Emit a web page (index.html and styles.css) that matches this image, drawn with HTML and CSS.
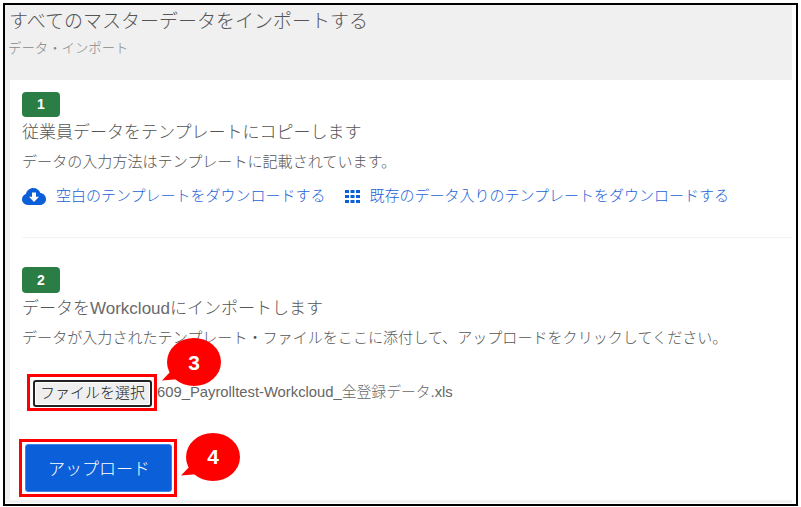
FILE: index.html
```html
<!DOCTYPE html>
<html lang="ja">
<head>
<meta charset="utf-8">
<title>データ・インポート</title>
<link rel="stylesheet" href="styles.css">
</head>
<body>
<div class="frame">
  <main class="main">
    <header class="head">
      <h1 class="title">すべてのマスターデータをインポートする</h1>
      <p class="crumb">データ・インポート</p>
    </header>
    <div class="card">
      <section class="step step-one">
        <span class="badge">1</span>
        <h2 class="step-title">従業員データをテンプレートにコピーします</h2>
        <p class="desc">データの入力方法はテンプレートに記載されています。</p>
        <div class="links">
          <a class="link">
            <svg class="icon-cloud" viewBox="0 0 24 17" aria-hidden="true"><path fill="#0b5fd8" d="M6 17C2.7 17 0 14.5 0 11.3 0 8.8 1.6 6.7 3.9 6 4.7 2.5 7.7 0 11.3 0c3.3 0 6.1 2.1 7.1 5.1 3.2.4 5.6 3 5.6 6.1 0 3.2-2.7 5.8-6 5.8z"/><path fill="#fff" d="M10 4.5h4v4.3h3l-5 5.2-5-5.2h3z"/></svg>
            空白のテンプレートをダウンロードする
          </a>
          <a class="link">
            <svg class="icon-grid" viewBox="0 0 15 13" aria-hidden="true"><path fill="#0b5fd8" d="M0 0h4v3H0zM5.500 0h4v3h-4zM11 0h4v3h-4zM0 5h4v3H0zM5.500 5h4v3h-4zM11 5h4v3h-4zM0 10h4v3H0zM5.500 10h4v3h-4zM11 10h4v3h-4z"/></svg>
            既存のデータ入りのテンプレートをダウンロードする
          </a>
        </div>
      </section>
      <section class="step step-two">
        <span class="badge badge-tall">2</span>
        <h2 class="step-title">データを<span class="latin">Workcloud</span>にインポートします</h2>
        <p class="desc">データが入力されたテンプレート・ファイルをここに添付して、アップロードをクリックしてください。</p>
        <div class="file-row">
          <span class="mark mark-file"><button class="file-btn" type="button">ファイルを選択</button></span>
          <span class="file-name">609_Payrolltest-Workcloud_全登録データ.xls</span>
        </div>
        <span class="mark mark-upload"><button class="upload-btn" type="button">アップロード</button></span>
      </section>
    </div>
  </main>
  <svg class="bubble bubble-3" viewBox="0 0 60 52" aria-hidden="true"><ellipse fill="#ff0000" cx="33" cy="24" rx="27" ry="24"/><polygon fill="#ff0000" points="1,42.500 19,41 10,33"/></svg>
  <span class="bubble-num num-3">3</span>
  <svg class="bubble bubble-4" viewBox="0 0 60 52" aria-hidden="true"><ellipse fill="#ff0000" cx="33" cy="24" rx="27" ry="24"/><polygon fill="#ff0000" points="1,42.500 19,41 10,33"/></svg>
  <span class="bubble-num num-4">4</span>
</div>
</body>
</html>
```
FILE: styles.css
```css
* { box-sizing: border-box; }
html, body { margin: 0; padding: 0; background: #fff; }
body {
  width: 801px;
  height: 507px;
  overflow: hidden;
  padding: 3px;
  font-family: "Liberation Sans", "Noto Sans CJK JP", sans-serif;
  color: #555;
}
.frame {
  position: relative;
  width: 795px;
  height: 503px;
  border: 2px solid #000;
  padding-right: 4px;
  background: #fff;
}
.main {
  height: 498px;
  background: #f0f0f0;
  padding: 0 0 3px 5px;
  display: flex;
  flex-direction: column;
}
.head { height: 75px; flex: none; }
.title {
  margin: 0 0 0 -1px;
  padding-top: 2px;
  font-size: 19px;
  font-weight: 300;
  line-height: 30px;
  color: #555;
}
.crumb {
  margin: -2px 0 0 -2px;
  font-size: 13.4px;
  font-weight: 300;
  line-height: 28px;
  color: #888;
}
.card {
  flex: 1;
  background: #fff;
  padding-left: 12px;
}
.step-one { height: 158px; padding-top: 12px; border-bottom: 1px solid #f3f3f3; }
.step-two { padding-top: 29px; }
.badge {
  display: block;
  width: 38px;
  height: 25px;
  background: #2a7d45;
  border-radius: 4px;
  color: #fff;
  font: bold 14px/25px "Liberation Sans", sans-serif;
  text-align: center;
}
.badge-tall { height: 26px; line-height: 26px; }
.step-title {
  margin: 2px 0 0;
  font-size: 17px;
  font-weight: 300;
  line-height: 28px;
  color: #555;
}
.latin { color: #6a6a6a; }
.desc {
  margin: 0;
  font-size: 15.07px;
  font-weight: 300;
  line-height: 29px;
  color: #555;
}
.links {
  display: flex;
  gap: 19px;
  margin-top: 5px;
  height: 30px;
  align-items: center;
}
.link {
  display: flex;
  align-items: center;
  font-size: 15px;
  font-weight: 300;
  color: #1c62d6;
  line-height: 30px;
}
.icon-cloud { width: 24px; height: 17px; margin-right: 10px; flex: none; }
.icon-grid { width: 15px; height: 13px; margin-right: 10px; flex: none; }
.file-row {
  display: flex;
  align-items: center;
  margin: 21px 0 0 5px;
  height: 38px;
}
.mark { display: block; border: 3px solid #f00; flex: none; }
.mark-file { padding: 3px 2px 1px 3px; }
.file-btn {
  display: block;
  width: 119px;
  height: 27px;
  padding: 0 0 3px;
  background: #efefef;
  border: 2px solid #222;
  border-radius: 3px;
  box-shadow: inset 0 0 0 1px #fff;
  font: 300 15px/20px "Noto Sans CJK JP", sans-serif;
  color: #222;
}
.file-name {
  font-size: 14.8px;
  font-weight: 300;
  line-height: 20px;
  padding-bottom: 1px;
  color: #666;
}
.mark-upload {
  width: 158px;
  margin: 28px 0 0 -3px;
  padding: 2px 2px 2px 3px;
}
.upload-btn {
  display: block;
  width: 147px;
  height: 48px;
  padding: 0 0 0 1px;
  border: 1px solid #3d86e8;
  border-radius: 3px;
  background: #0b5fd8;
  color: #fff;
  font: 300 17px/46px "Noto Sans CJK JP", sans-serif;
}
.bubble { position: absolute; width: 60px; height: 52px; }
.bubble-3 { left: 156px; top: 333px; }
.bubble-4 { left: 175px; top: 428px; }
.bubble-num {
  position: absolute;
  width: 30px;
  text-align: center;
  color: #fff;
  font: bold 21px/24px "Liberation Sans", sans-serif;
}
.num-3 { left: 174px; top: 346px; }
.num-4 { left: 193px; top: 440px; }
```
